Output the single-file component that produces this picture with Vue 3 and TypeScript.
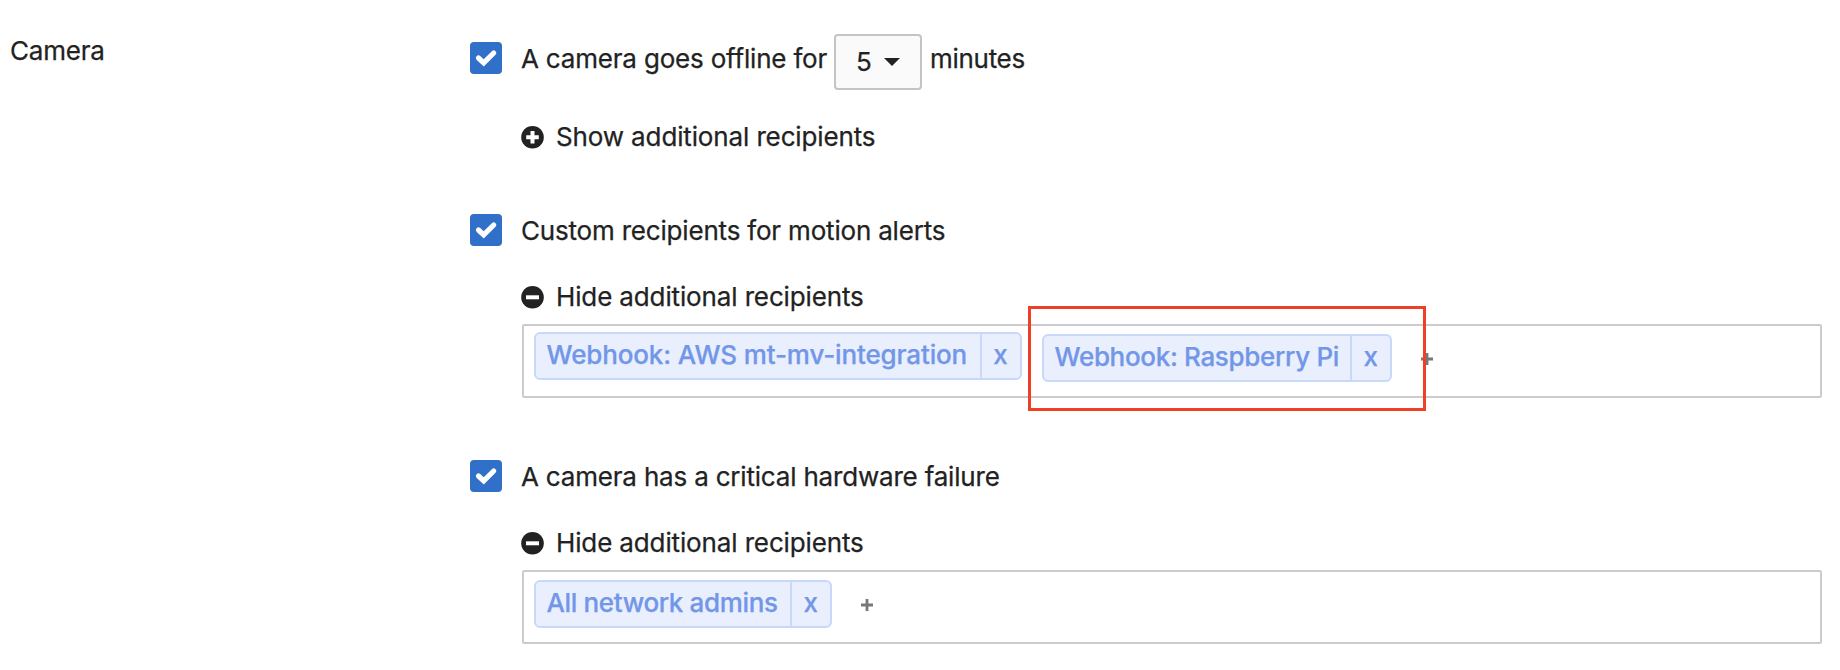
<script setup lang="ts">
interface Recipient {
  id: string
  name: string
  highlighted?: boolean
}

interface Alert {
  id: string
  label: string
  suffix?: string
  duration?: number
  expanded: boolean
  recipients: Recipient[]
}

const alerts: Alert[] = [
  {
    id: 'offline',
    label: 'A camera goes offline for',
    suffix: 'minutes',
    duration: 5,
    expanded: false,
    recipients: [],
  },
  {
    id: 'motion',
    label: 'Custom recipients for motion alerts',
    expanded: true,
    recipients: [
      { id: 'aws', name: 'Webhook: AWS mt-mv-integration' },
      { id: 'pi', name: 'Webhook: Raspberry Pi', highlighted: true },
    ],
  },
  {
    id: 'hardware',
    label: 'A camera has a critical hardware failure',
    expanded: true,
    recipients: [{ id: 'admins', name: 'All network admins' }],
  },
]
</script>

<template>
  <main class="settings">
    <div class="category"><span>Camera</span></div>
    <div class="alerts">
      <section v-for="alert in alerts" :key="alert.id" class="alert" :class="alert.id">
        <div class="alert-row">
          <span class="checkbox" role="checkbox" aria-checked="true">
            <svg viewBox="0 0 32 32" width="32" height="32">
              <path d="M8.5 16L13.7 20.8L23.7 11" />
            </svg>
          </span>
          <span class="alert-label">{{ alert.label }}</span>
          <button v-if="alert.duration" class="select" type="button">
            <span>{{ alert.duration }}</span>
            <svg viewBox="0 0 16 8" width="16" height="8"><path d="M0 0H16L8 8Z" /></svg>
          </button>
          <span v-if="alert.suffix" class="suffix">{{ alert.suffix }}</span>
        </div>
        <div class="toggle">
          <svg viewBox="0 0 23 23" width="23" height="23">
            <circle cx="11.5" cy="11.3" r="11.3" />
            <path v-if="alert.expanded" class="minus" d="M5 11.3H18" />
            <path v-else class="plus-sign" d="M5.2 11.3H17.8M11.5 5V17.6" />
          </svg>
          <span class="toggle-label">{{ alert.expanded ? 'Hide' : 'Show' }} additional recipients</span>
        </div>
        <div v-if="alert.expanded" class="recipients">
          <div v-for="r in alert.recipients" :key="r.id" class="chip" :class="r.id">
            <span class="chip-name"><span>{{ r.name }}</span></span>
            <span class="chip-remove"><span>x</span></span>
            <i v-if="r.highlighted" class="highlight"></i>
          </div>
          <svg class="add" viewBox="0 0 12 12" width="12" height="12">
            <path d="M0 6H12M6 0V12" />
          </svg>
        </div>
      </section>
    </div>
  </main>
</template>

<style>
body {
  background: #fff;
}
</style>

<style scoped>
.settings {
  box-sizing: border-box;
  display: grid;
  grid-template-columns: 460px 1352px;
  height: 670px;
  padding: 34px 0 0 10px;
  overflow: hidden;
  color: #222;
  font: 26px/32px Inter, sans-serif;
  white-space: nowrap;
  -webkit-text-stroke: 0.25px currentColor;
}
.category {
  padding-top: 1px;
  letter-spacing: -0.2px;
}
.alert {
  height: 246px;
}
.offline {
  height: 180px;
}
.alert-row {
  display: flex;
  align-items: flex-start;
  height: 32px;
}
.offline .alert-row {
  height: 56px;
}
.alert-label {
  line-height: 34px;
  letter-spacing: -0.19px;
}
.suffix {
  line-height: 34px;
  letter-spacing: -0.3px;
}
.offline .checkbox,
.offline .alert-label,
.suffix {
  margin-top: 8px;
}
.checkbox {
  width: 32px;
  height: 32px;
  margin-right: 19px;
  border-radius: 4px;
  background: #3070c8;
}
.checkbox svg {
  display: block;
}
.checkbox path {
  fill: none;
  stroke: #fff;
  stroke-width: 5.2;
  stroke-linecap: round;
  stroke-linejoin: miter;
}
.select {
  box-sizing: border-box;
  display: flex;
  align-items: center;
  width: 88px;
  height: 56px;
  margin: 0 8px 0 7px;
  padding: 0 0 0 20px;
  border: 2px solid #c4c4c4;
  border-radius: 4px;
  background: #fafafa;
  color: inherit;
  font: inherit;
}
.select span {
  padding-bottom: 1px;
}
.select svg {
  margin-left: auto;
  margin-right: 20px;
  fill: #222;
}
.toggle {
  display: flex;
  align-items: center;
  gap: 12px;
  height: 32px;
  margin: 35px 0 11px 51px;
  letter-spacing: -0.13px;
}
.offline .toggle {
  margin-top: 31px;
}
.toggle circle {
  fill: #222;
}
.toggle path {
  fill: none;
  stroke: #fff;
  stroke-width: 4;
}
.recipients {
  box-sizing: border-box;
  display: flex;
  align-items: flex-start;
  height: 74px;
  margin-left: 52px;
  width: 1300px;
  padding: 6px 10px;
  border: 2px solid #ccc;
  border-radius: 2px;
}
.chip {
  position: relative;
  box-sizing: border-box;
  display: flex;
  height: 48px;
  border: 2px solid #c8d8fa;
  border-radius: 6px;
  background: #e9effd;
  color: #7296e8;
  font-weight: 500;
  line-height: 42px;
}
.aws {
  width: 488px;
  margin-right: 20px;
  letter-spacing: -0.14px;
}
.pi {
  width: 350px;
  margin-top: 2px;
  letter-spacing: -0.33px;
}
.admins {
  width: 298px;
  margin-top: 2px;
  letter-spacing: -0.36px;
}
.chip-name {
  flex: 1;
  padding-left: 10.5px;
}
.chip-remove {
  box-sizing: border-box;
  width: 40px;
  padding-right: 1px;
  border-left: 2px solid #c8d8fa;
  text-align: center;
}
.highlight {
  position: absolute;
  top: -30px;
  left: -16px;
  width: 392px;
  height: 99px;
  border: 3px solid #ee4027;
}
.add {
  margin: 21px 0 0 29px;
}
.add path {
  stroke: #777;
  stroke-width: 2.8;
}
</style>
